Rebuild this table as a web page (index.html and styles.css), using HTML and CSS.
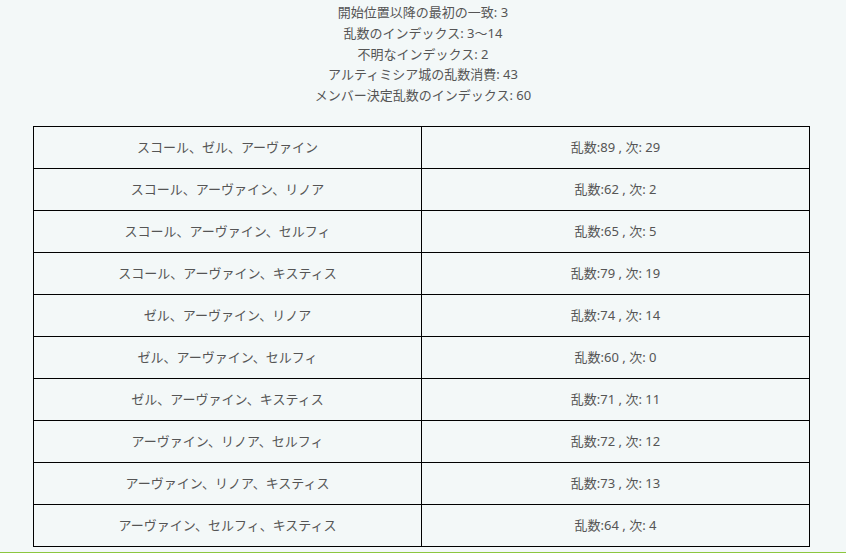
FILE: index.html
```html
<!DOCTYPE html>
<html lang="ja">
<head>
<meta charset="utf-8">
<link rel="stylesheet" href="styles.css">
</head>
<body>
<div class="page">
  <div class="info">
    <p>開始位置以降の最初の一致: 3</p>
    <p>乱数のインデックス: 3〜14</p>
    <p>不明なインデックス: 2</p>
    <p>アルティミシア城の乱数消費: 43</p>
    <p>メンバー決定乱数のインデックス: 60</p>
  </div>
  <table class="result">
    <tbody>
      <tr><td>スコール、ゼル、アーヴァイン</td><td>乱数:89 , 次: 29</td></tr>
      <tr><td>スコール、アーヴァイン、リノア</td><td>乱数:62 , 次: 2</td></tr>
      <tr><td>スコール、アーヴァイン、セルフィ</td><td>乱数:65 , 次: 5</td></tr>
      <tr><td>スコール、アーヴァイン、キスティス</td><td>乱数:79 , 次: 19</td></tr>
      <tr><td>ゼル、アーヴァイン、リノア</td><td>乱数:74 , 次: 14</td></tr>
      <tr><td>ゼル、アーヴァイン、セルフィ</td><td>乱数:60 , 次: 0</td></tr>
      <tr><td>ゼル、アーヴァイン、キスティス</td><td>乱数:71 , 次: 11</td></tr>
      <tr><td>アーヴァイン、リノア、セルフィ</td><td>乱数:72 , 次: 12</td></tr>
      <tr><td>アーヴァイン、リノア、キスティス</td><td>乱数:73 , 次: 13</td></tr>
      <tr><td>アーヴァイン、セルフィ、キスティス</td><td>乱数:64 , 次: 4</td></tr>
    </tbody>
  </table>
  <div class="footer-line"></div>
</div>
</body>
</html>
```

FILE: styles.css
```css
html, body {
  margin: 0;
  padding: 0;
  background: #f3f8f8;
}
body {
  font-family: "Noto Sans", "Noto Sans CJK JP", sans-serif;
  font-size: 13px;
  color: #555;
  line-height: 20.8px;
}
.page {
  padding-top: 2px;
}
.info {
  text-align: center;
}
.info p {
  margin: 0;
}
.result {
  margin: 20px 0 0 33px;
  width: 777px;
  border-collapse: collapse;
  table-layout: fixed;
}
.result td {
  border: 1px solid #000;
  height: 41px;
  padding: 0;
  text-align: center;
  vertical-align: middle;
}
.footer-line {
  margin-top: 5px;
  border-top: 2px solid #8cc63f;
}
```
